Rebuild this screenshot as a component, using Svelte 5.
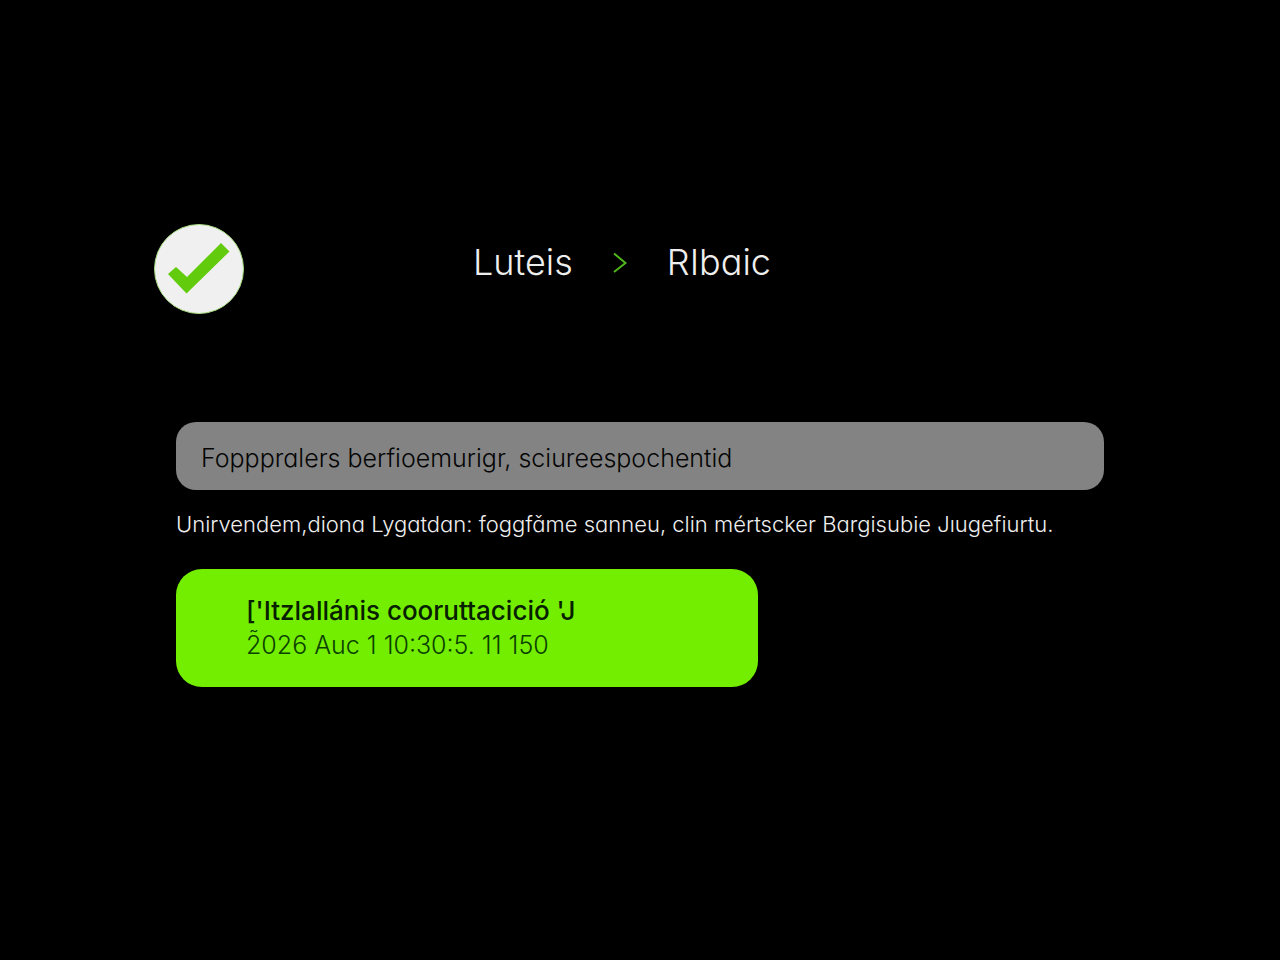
<script>
  let query = $state("Fopppralers berfioemurigr, sciureespochentid");
</script>

<main>
  <header>
    <svg class="status" viewBox="0 0 90 90" role="img" aria-label="OK">
      <circle cx="45" cy="45" r="44.5" fill="#f0f0f0" stroke="#a6dc80" />
      <path d="M14 50 22 43 33 53 67 19 75.500 27.500 32.500 69.500Z" fill="#62cb0b" />
    </svg>
    <nav>
      <a href="#luteis">Luteis</a>
      <svg class="chevron" viewBox="0 0 14 22" aria-hidden="true">
        <path d="M1 2.500 12.500 12 1 21" fill="none" stroke="#52b81c" stroke-width="2" />
      </svg>
      <a href="#ribaic">RIbaic</a>
    </nav>
  </header>

  <section>
    <input
      type="text"
      aria-label="Fopppralers"
      aria-describedby="hint"
      bind:value={query} />
    <p id="hint">
      Unirvendem,diona Lygatdan: foggfǎme sanneu, clin mértscker Bargisubie Jıugefiurtu.
    </p>
    <button type="button">
      <span class="title">['Itzlallánis cooruttacició 'J</span>
      <span class="date">2̃026 Auc 1 10:30:5. 11 150</span>
    </button>
  </section>
</main>

<style>
  :global(body) {
    margin: 0;
    background: #000;
  }

  main {
    max-width: 972px;
    margin: 0 auto;
    padding: 224px 24px 40px;
    font-family: Inter, "Liberation Sans", sans-serif;
    font-feature-settings: "cv11";
    color: #eee;
  }

  header {
    display: flex;
    gap: 229px;
  }

  .status {
    flex: none;
    width: 90px;
    height: 90px;
  }

  nav {
    display: flex;
    align-items: center;
    gap: 40px;
    height: 76px;
    font-size: 36px;
    font-weight: 300;
  }

  nav a {
    color: inherit;
    text-decoration: none;
  }

  .chevron {
    width: 14px;
    height: 22px;
  }

  section {
    padding: 108px 22px 0;
  }

  input {
    display: block;
    box-sizing: border-box;
    width: 100%;
    height: 68px;
    padding: 4px 25px 0;
    border: none;
    border-radius: 20px;
    background: #838383;
    color: #050505;
    font: inherit;
    font-feature-settings: inherit;
    font-size: 25px;
    font-weight: 300;
  }

  p {
    margin: 20px 0 31px;
    font-size: 22px;
    font-weight: 300;
    line-height: 28px;
  }

  button {
    display: flex;
    flex-direction: column;
    box-sizing: border-box;
    width: 582px;
    max-width: 100%;
    padding: 24px 70px;
    border: none;
    border-radius: 26px;
    background: #74ee00;
    color: #062000;
    font: inherit;
    font-feature-settings: inherit;
    line-height: 35px;
    text-align: left;
  }

  .title {
    font-size: 26px;
    font-weight: 500;
    font-feature-settings: normal;
  }

  .date {
    font-size: 25px;
    font-weight: 300;
    color: #0a4200;
  }
</style>
